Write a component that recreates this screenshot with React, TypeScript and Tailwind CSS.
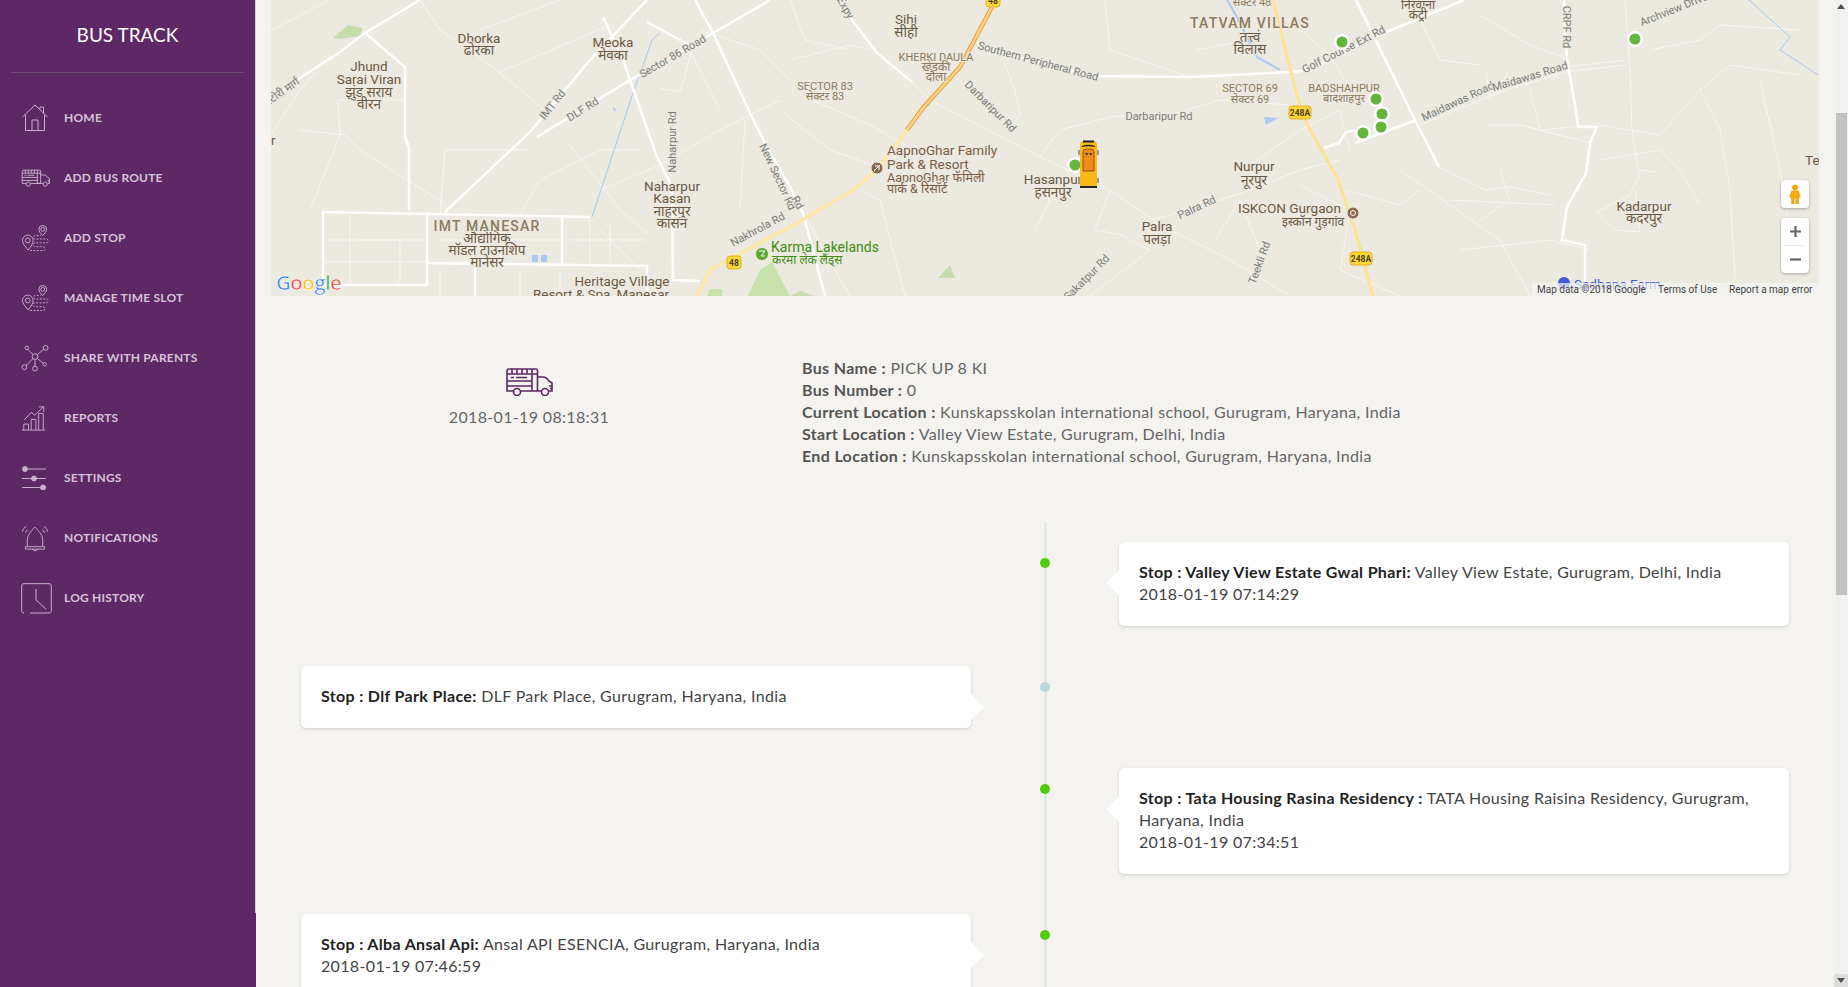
const nav = [
  { label: 'HOME', icon: <HomeIcon /> },
  { label: 'ADD BUS ROUTE', icon: <BusIcon className="w-[29px] h-[18px]" /> },
  { label: 'ADD STOP', icon: <StopIcon /> },
  { label: 'MANAGE TIME SLOT', icon: <StopIcon /> },
  { label: 'SHARE WITH PARENTS', icon: <ShareIcon /> },
  { label: 'REPORTS', icon: <ChartIcon /> },
  { label: 'SETTINGS', icon: <SlidersIcon /> },
  { label: 'NOTIFICATIONS', icon: <BellIcon /> },
  { label: 'LOG HISTORY', icon: <ClockIcon /> },
]

const busInfo = [
  ['Bus Name :', 'PICK UP 8 KI'],
  ['Bus Number :', '0'],
  ['Current Location :', 'Kunskapsskolan international school, Gurugram, Haryana, India'],
  ['Start Location :', 'Valley View Estate, Gurugram, Delhi, India'],
  ['End Location :', 'Kunskapsskolan international school, Gurugram, Haryana, India'],
]

const stops = [
  { name: 'Stop : Valley View Estate Gwal Phari:', place: 'Valley View Estate, Gurugram, Delhi, India', time: '2018-01-19 07:14:29', side: 'right', dot: 'bg-[#52cc0a]' },
  { name: 'Stop : Dlf Park Place:', place: 'DLF Park Place, Gurugram, Haryana, India', time: '', side: 'left', dot: 'bg-[#b9d8dd]' },
  { name: 'Stop : Tata Housing Rasina Residency :', place: 'TATA Housing Raisina Residency, Gurugram, Haryana, India', time: '2018-01-19 07:34:51', side: 'right', dot: 'bg-[#52cc0a]' },
  { name: 'Stop : Alba Ansal Api:', place: 'Ansal API ESENCIA, Gurugram, Haryana, India', time: '2018-01-19 07:46:59', side: 'left', dot: 'bg-[#52cc0a]' },
]

// main roads, in page pixels
const wideRoads = [
  '271,100 300,78 340,52 365,33 420,0',
  '365,33 405,67 405,137 409,147 409,210',
  '323,296 323,212 590,217',
  '323,285 427,285 427,213',
  '562,217 562,265',
  '427,263 647,266 647,296',
  '475,267 475,296',
  '445,212 530,132 590,60 647,0',
  '537,137 630,80 713,33 770,0',
  '603,17 623,60 657,157 672,187 673,280 700,281',
  '695,0 713,33 750,113 767,147 790,187 803,213 825,296',
  '647,22 693,47',
  '840,0 852,20 877,53 912,82',
  '977,43 1000,52 1092,76 1190,77 1290,72 1310,70 1379,35 1464,0',
  '1356,0 1416,122 1439,167',
  '1355,143 1416,120',
  '1324,148 1339,143 1346,132 1355,130',
  '1564,0 1567,60 1576,110 1578,127 1597,127 1590,143 1586,173 1567,207 1562,240 1585,245 1585,287',
]

const thinRoads = [
  '1416,120 1499,87 1564,67 1626,60', '1420,125 1500,92 1566,72 1626,65',
  '271,30 330,0', '420,0 440,30 490,65 545,110', '480,30 560,0', '500,72 610,25', '271,135 300,90 330,55', '300,130 345,135 360,150 447,205',
  '310,210 340,135', '340,135 338,100 405,100', '440,215 445,150 530,150', '520,215 540,180 600,150 640,150', '570,145 620,210 650,235',
  '600,190 660,165 720,130 780,100', '690,50 720,110', '740,210 745,120', '660,88 680,92 693,47', '700,30 760,50 790,80', '790,0 805,40 850,50',
  '790,60 850,45 872,50', '800,95 870,125 915,150', '780,110 830,150 873,165', '803,213 850,296', '860,190 880,200 905,296', '912,82 930,100 1040,157 1110,190 1160,225 1230,260 1290,296',
  '1000,52 1015,90 1020,115 1013,125', '1040,157 1060,130 1110,117 1130,115', '1035,230 1050,200 1030,190', '1110,190 1095,230 1125,235', '1120,235 1150,250 1090,296',
  '1150,220 1190,210 1250,190 1300,170 1340,160', '1215,240 1240,200 1260,250', '1250,165 1300,130 1340,110 1350,150', '1130,115 1170,115 1220,100 1290,105',
  '1105,0 1110,50 1190,77', '1195,50 1250,40', '1300,185 1350,210 1340,270 1400,296', '1439,167 1486,190 1510,187 1550,195', '1400,170 1500,240 1530,296',
  '1450,200 1555,205', '1460,250 1550,240 1590,250', '1590,143 1520,125 1490,125', '1625,0 1630,70 1632,130 1640,180', '1600,125 1660,135 1700,90 1730,65 1800,75',
  '1600,160 1660,150 1680,170 1700,205', '1597,212 1630,195 1640,170 1655,172', '1597,212 1615,230 1640,232 1635,190', '1700,90 1720,130 1730,190 1735,280', '1760,80 1780,170 1790,230',
  '1650,50 1700,40 1720,25 1800,30', '1480,15 1530,45 1570,60', '1486,70 1490,100 1510,70', '1530,90 1540,130 1590,125', '1420,20 1440,60 1480,65', '1300,30 1330,55 1345,80',
  '360,240 400,240 400,285', '350,215 350,285', '440,270 440,296', '500,220 500,262', '590,220 590,265', '610,225 610,262', '325,240 425,240', '325,262 425,262', '440,240 560,240',
  '570,240 645,240', '520,270 520,296', '560,270 560,296', '600,230 640,270', '1345,190 1400,205 1420,190', '1310,30 1290,20', '1500,170 1510,200 1480,220',
]

const labels: [number, number, string, number?][] = [
  [479, 43, 'Dhorka'], [479, 55, 'ढोरका'], [369, 71, 'Jhund'], [369, 84, 'Sarai Viran'], [369, 97, 'झुंड सराय'], [369, 109, 'वीरन'], [613, 47, 'Meoka'], [613, 60, 'मेवका'],
  [672, 191, 'Naharpur'], [672, 203, 'Kasan'], [672, 216, 'नाहरपुर'], [672, 228, 'कासन'], [906, 24, 'Sihi'], [906, 37, 'सीही'], [1053, 184, 'Hasanpur'], [1053, 197, 'हसनपुर'],
  [1254, 171, 'Nurpur'], [1254, 185, 'नूरपुर'], [1157, 231, 'Palra'], [1157, 244, 'पलड़ा'], [1644, 211, 'Kadarpur'], [1644, 223, 'कदरपुर'], [622, 286, 'Heritage Village'], [601, 299, 'Resort & Spa, Manesar'],
  [1418, 9, 'निरवाना', 12], [1418, 19, 'कंट्री', 12], [1250, 42, 'तत्त्वं'], [1250, 54, 'विलास'], [487, 243, 'औद्योगिक'], [487, 255, 'मॉडल टाउनशिप'], [487, 267, 'मानेसर'],
]

const districts: [number, number, string, number, number?][] = [
  [487, 231, 'IMT MANESAR', 14, 1], [936, 61, 'KHERKI DAULA', 11], [825, 90, 'SECTOR 83', 11], [1250, 92, 'SECTOR 69', 11], [1344, 92, 'BADSHAHPUR', 11], [1250, 28, 'TATVAM VILLAS', 14, 1],
  [936, 71, 'खेड़की', 12], [936, 81, 'दौला', 12], [825, 100, 'सेक्टर 83', 11], [1250, 103, 'सेक्टर 69', 11], [1344, 102, 'बादशाहपुर', 11], [1252, 6, 'सेक्टर 48', 11],
]

const roadNames: [number, number, string, number][] = [
  [553, 105, 'IMT Rd', -52], [583, 110, 'DLF Rd', -32], [673, 57, 'Sector 86 Road', -30], [673, 142, 'Naharpur Rd', -90], [777, 177, 'New Sector Rd', 65], [758, 230, 'Nakhrola Rd', -28],
  [283, 92, 'स्टोरी मार्ग', -35], [1038, 62, 'Southern Peripheral Road', 15], [990, 107, 'Darbaripur Rd', 45], [1159, 117, 'Darbaripur Rd', 0], [1197, 208, 'Palra Rd', -25], [1087, 278, 'Sakatpur Rd', -45],
  [1260, 263, 'Teekli Rd', -70], [845, 8, 'Expy', 60], [797, 203, 'Rd', 60], [1344, 50, 'Golf Course Ext Rd', -27], [1566, 27, 'CRPF Rd', 90], [1674, 10, 'Archview Drive', -22], [1458, 102, 'Maidawas Road', -25], [1530, 77, 'Maidawas Road', -17],
]

const markers = [[1342, 42], [1635, 39], [1376, 99], [1382, 114], [1381, 127], [1363, 133], [1075, 165]]

function HomeIcon() {
  return (
    <svg viewBox="0 0 28 28" className="w-[28px] h-[28px]" fill="none" stroke="currentColor" strokeWidth="1">
      <path d="M1.500 13 14 1 26.500 13M4.500 11V26.500H23.500V11M11 26.500V16H17V26.500M19 5.500V3H22.500V9.500" />
    </svg>
  )
}

function BusIcon({ className }: { className: string }) {
  return (
    <svg viewBox="0 0 48 28" className={className} fill="none" stroke="currentColor" strokeWidth="1.600">
      <path d="M8 23H2V3C2 1.500 3 1 4 1H31C32 1 32.500 1.500 32.500 3V23H16M24 23H36.500M32.500 9H38C41 9 42 10 44 13L47 15V23H44" />
      <path d="M2 6H32.500M7 1V6M12 1V6M17 1V6M22 1V6M27 1V6M2 13H27M6 9.500H9M11 9.500H22M27 6V23M2 18H27M47 18H44M47 20.500H45" />
      <circle cx="12" cy="24" r="3.500" /><circle cx="40" cy="24" r="3.500" />
    </svg>
  )
}

function StopIcon() {
  return (
    <svg viewBox="0 0 28 28" className="w-[28px] h-[27px]" fill="none" stroke="currentColor" strokeWidth="1">
      <path d="M7 26C3 21 1 19 1 16A5.500 5.500 0 0 1 12 16C12 19 10 22 7 26Z" />
      <circle cx="6.500" cy="16" r="2.500" />
      <path d="M22 11C20 8.500 18 7 18 4.500A4 4 0 0 1 26 4.500C26 7 24 8.500 22 11Z" />
      <circle cx="22" cy="4.500" r="2" />
      <path strokeDasharray="2 1.500" d="M9 26.500H23C25 26.500 24.500 22.500 22 22.500H14C11.500 22.500 11.500 18.500 14 18.500H26C28 18.500 28 14.500 26 14.500H14C12 14.500 12 11 14 11H20" />
    </svg>
  )
}

function ShareIcon() {
  return (
    <svg viewBox="0 0 28 28" className="w-[28px] h-[27px]" fill="none" stroke="currentColor" strokeWidth="1">
      <circle cx="14" cy="12" r="3" /><circle cx="5.500" cy="3" r="1.800" /><circle cx="25" cy="3" r="2.500" /><circle cx="3" cy="23" r="2.500" /><circle cx="14" cy="24.500" r="2.500" /><circle cx="24" cy="20" r="1.800" />
      <path d="M6.500 4.500 12 10M16.500 10 23 4.500M12 14 4.500 21.500M14 15V22M16.500 14 22.500 19" />
    </svg>
  )
}

function ChartIcon() {
  return (
    <svg viewBox="0 0 28 28" className="w-[26px] h-[27px]" fill="none" stroke="currentColor" strokeWidth="1">
      <path d="M1 26.500H26M3 26.500V20H8V26.500M11 26.500V15H16V26.500M19 26.500V8.500H24V26.500" />
      <path d="M3.500 15.500 11 7.500 15 10.500 24.500 1M19 1.500H24.500V7" />
    </svg>
  )
}

function SlidersIcon() {
  return (
    <svg viewBox="0 0 26 24" className="w-[26px] h-[24px]" fill="none" stroke="currentColor" strokeWidth="1">
      <path d="M5 3H25M1 12.500H25M1 21.500H25" />
      <circle cx="4" cy="3" r="2.500" fill="currentColor" /><circle cx="13" cy="12.500" r="2.500" fill="currentColor" /><circle cx="22" cy="21.500" r="2.500" fill="currentColor" />
    </svg>
  )
}

function BellIcon() {
  return (
    <svg viewBox="0 0 28 28" className="w-[28px] h-[27px]" fill="none" stroke="currentColor" strokeWidth="1">
      <path d="M6 22V17C6 10 9 8 11 5.500C12 4 13 2.500 14 2.500C15 2.500 16 4 17 5.500C19 8 22 10 22 17V22" />
      <path d="M4 22.500H24V25H4ZM11 25 14 27 17 25M1 7C1.500 4 3 2.500 5 1.500M4 8C4.500 6.500 5.500 5.500 6.500 5M27 7C26.500 4 25 2.500 23 1.500M24 8C23.500 6.500 22.500 5.500 21.500 5" />
    </svg>
  )
}

function ClockIcon() {
  return (
    <svg viewBox="0 0 31 31" className="w-[31px] h-[31px]" fill="none" stroke="currentColor" strokeWidth="1">
      <path d="M3 30C1.500 30 .700 29 .700 28V3C.700 1.500 1.500.700 3 .700H28C29.500.700 30.300 1.500 30.300 3V28C30.300 29 29.500 30 28 30H9" />
      <path d="M15 6V17L25 26" />
    </svg>
  )
}

function RoadBadge({ x, y, label }: { x: number; y: number; label: string }) {
  const w = label.length > 2 ? 22 : 14
  return (
    <g>
      <rect x={x - w / 2} y={y - 6} width={w} height={13} rx="3" fill="#fdd835" stroke="#e0b02a" />
      <text x={x} y={y + 4} textAnchor="middle" fontSize="8.500" fontWeight="700" fill="#4d4020">{label}</text>
    </g>
  )
}

function MapCanvas() {
  return (
    <svg viewBox="271 0 1548 296" className="absolute inset-0 w-full h-full" fontFamily="Roboto, 'Noto Sans Devanagari', 'Noto Sans', sans-serif">
      {thinRoads.map((p, i) => <polyline key={i} points={p} fill="none" stroke="#f7f6f2" strokeWidth="1" />)}
      <path d="M333 38 348 25 363 28 360 36 340 39Z" fill="#c6dcae" />
      <path d="M748 296 760 270 772 262 790 296Z" fill="#c9e2ac" />
      <path d="M707 296 710 289 722 289 722 296Z" fill="#c9e2ac" />
      <path d="M938 278 950 265 955 278Z" fill="#c6dcae" />
      <path d="M790 296 800 291 815 296Z" fill="#c6dcae" />
      <polyline points="660,33 652,40 633,93 592,217" fill="none" stroke="#a9c9f2" strokeWidth="1" />
      <polyline points="1749,0 1790,37 1780,50 1818,75" fill="none" stroke="#a9c9f2" strokeWidth="1" />
      <polyline points="1227,0 1237,17 1257,57 1280,70" fill="none" stroke="#a9c9f2" strokeWidth="2" />
      <path d="M1264 117 1278 118 1266 125Z M612 107 616 109 615 112Z" fill="#a9c9f2" />
      <rect x="532" y="255" width="6" height="7" fill="#a9c9f2" /><rect x="541" y="255" width="6" height="7" fill="#a9c9f2" />
      {wideRoads.map((p, i) => <polyline key={i} points={p} fill="none" stroke="#ffffff" strokeWidth="2.500" />)}
      <polyline points="697,296 710,270 790,227 853,190 877,170 907,130" fill="none" stroke="#fde8a6" strokeWidth="3.500" />
      <polyline points="1273,0 1300,107 1310,130 1337,177 1355,230 1373,297" fill="none" stroke="#fde293" strokeWidth="3" />
      <polyline points="907,130 923,108 960,67 992,7" fill="none" stroke="#e9a23b" strokeWidth="4.500" />
      <polyline points="907,130 923,108 960,67 992,7" fill="none" stroke="#fcd28a" strokeWidth="2.500" />

      {roadNames.map(([x, y, t, r]) => (
        <text key={t + x} x={x} y={y + 3} transform={`rotate(${r} ${x} ${y})`} textAnchor="middle" fontSize="11" fill="#7c7c7c" stroke="#ebe9e0" strokeWidth="2" paintOrder="stroke">{t}</text>
      ))}
      {labels.map(([x, y, t, s]) => (
        <text key={t + x} x={x} y={y} textAnchor="middle" fontSize={s ?? 13.500} fill="#6b5a42" stroke="#ebe9e0" strokeWidth="2" paintOrder="stroke">{t}</text>
      ))}
      {districts.map(([x, y, t, s, sp]) => (
        <text key={t} x={x} y={y} textAnchor="middle" fontSize={s} letterSpacing={sp ? 1.200 : 0} fontWeight={sp ? 500 : 400} fill="#8c7b5c" stroke="#ebe9e0" strokeWidth="2" paintOrder="stroke">{t}</text>
      ))}

      <g fill="#7d5c43" stroke="#ebe9e0" strokeWidth="2" paintOrder="stroke" fontSize="13.500">
        <text x="887" y="155">AapnoGhar Family</text>
        <text x="887" y="169">Park &amp; Resort</text>
        <text x="887" y="182" fontSize="12.500">AapnoGhar फॅमिली</text>
        <text x="887" y="193" fontSize="12.500">पार्क &amp; रिसॉर्ट</text>
      </g>
      <g fill="#6b5a42" stroke="#ebe9e0" strokeWidth="2" paintOrder="stroke">
        <text x="1238" y="213" fontSize="13.600">ISKCON Gurgaon</text>
        <text x="1282" y="226" fontSize="12">इस्कॉन गुड़गांव</text>
        <text x="1805" y="165" fontSize="13.500">Te</text>
        <text x="271" y="145" fontSize="13">r</text>
      </g>
      <g fill="#3f8f0e" stroke="#ebe9e0" strokeWidth="2" paintOrder="stroke">
        <text x="771" y="252" fontSize="14">Karma Lakelands</text>
        <text x="772" y="264" fontSize="12">करमा लेक लैंड्स</text>
      </g>
      <text x="1574" y="289" fontSize="13.500" fill="#3e5bd8">Sadhana Farm</text>
      <circle cx="1564" cy="283" r="6" fill="#3e5bd8" />

      <circle cx="877" cy="168" r="6" fill="#8b6a50" stroke="#ebe9e0" /><path d="M874 171 880 165M875 166H879V170" stroke="#fff" fill="none" />
      <circle cx="1353" cy="213" r="6" fill="#8b6a50" stroke="#ebe9e0" /><circle cx="1353" cy="213" r="2.500" fill="none" stroke="#fff" />
      <circle cx="762" cy="254" r="6.500" fill="#5ba82a" stroke="#ebe9e0" /><path d="M759 251H765L761 256H765" stroke="#fff" fill="none" />
      <RoadBadge x={734} y={262} label="48" />
      <RoadBadge x={993} y={0} label="48" />
      <RoadBadge x={1300} y={112} label="248A" />
      <RoadBadge x={1361} y={258} label="248A" />

      {markers.map(([x, y]) => (
        <g key={x}>
          <circle cx={x} cy={y} r="8" fill="#ffffff" />
          <circle cx={x} cy={y} r="5.500" fill="#63b53c" />
        </g>
      ))}

      {/* bus marker */}
      <rect x="1078" y="150" width="3" height="5" fill="#9a9a9a" /><rect x="1096" y="150" width="3" height="5" fill="#9a9a9a" />
      <rect x="1078" y="178" width="3" height="5" fill="#9a9a9a" /><rect x="1096" y="178" width="3" height="5" fill="#9a9a9a" />
      <path d="M1080 187V145Q1080 141 1084 141H1093Q1097 141 1097 145V187Z" fill="#fbb917" />
      <path d="M1083 140.500H1094V142.500H1083ZM1082 146Q1088.500 143.500 1095 146V147Q1088.500 145.500 1082 147ZM1080 186H1097V188H1080Z" fill="#222" />
      <path d="M1083 171V152Q1083 149 1086 149H1091Q1094 149 1094 152V171Z" fill="#f08a1a" stroke="#5a3a10" strokeWidth=".700" />
      <path d="M1085 153H1088L1087 156ZM1089 153H1092L1091 156Z" fill="#333" />

      {/* google logo */}
      <text x="276" y="290" fontFamily="'Open Sans', sans-serif" fontSize="20.500" fontWeight="600" letterSpacing="-.6" stroke="#fff" strokeWidth=".6">
        <tspan fill="#4285f4">G</tspan><tspan fill="#ea4335">o</tspan><tspan fill="#fbbc05">o</tspan><tspan fill="#4285f4">g</tspan><tspan fill="#34a853">l</tspan><tspan fill="#ea4335">e</tspan>
      </text>
    </svg>
  )
}

function MapView() {
  return (
    <div className="relative h-[296px] ml-[15px] mr-[15px] bg-[#ebe9e0] overflow-hidden font-[Roboto,sans-serif]">
      <MapCanvas />
      {/* street view */}
      <div className="absolute top-[180px] right-[10px] w-[28px] h-[28px] bg-white rounded-sm shadow-[0_1px_3px_rgba(0,0,0,.3)] flex items-center justify-center">
        <svg viewBox="0 0 14 24" className="w-[12px] h-[20px]">
          <circle cx="7" cy="4" r="3.500" fill="#f5a90d" />
          <path d="M3 8H11L13.500 16H11.500L11 24H8V17H6V24H3L2.500 16H.500Z" fill="#f5a90d" stroke="#c98a10" strokeWidth=".5" />
        </svg>
      </div>
      {/* zoom buttons */}
      <div className="absolute top-[218px] right-[10px] w-[28px] h-[55px] bg-white rounded-sm shadow-[0_1px_3px_rgba(0,0,0,.3)] flex flex-col items-center">
        <div className="h-[27px] w-full flex items-center justify-center">
          <svg viewBox="0 0 12 12" className="w-[11px] h-[11px]"><path d="M0 6H12M6 0V12" stroke="#666" strokeWidth="2.400" /></svg>
        </div>
        <div className="h-px w-[20px] bg-[#e6e6e6]"></div>
        <div className="h-[27px] w-full flex items-center justify-center">
          <svg viewBox="0 0 12 12" className="w-[11px] h-[11px]"><path d="M0 6H12" stroke="#666" strokeWidth="2.400" /></svg>
        </div>
      </div>
      {/* attribution */}
      <div className="absolute bottom-0 right-0 w-[287px] h-[13px] bg-[#f5f5f5]/70 flex items-center text-[10px] leading-none text-[#444] whitespace-nowrap">
        <span className="ml-[5px] w-[121px]">Map data ©2018 Google</span>
        <span className="w-[71px]">Terms of Use</span>
        <span>Report a map error</span>
      </div>
    </div>
  )
}

function StopCard({ stop }: { stop: (typeof stops)[number] }) {
  const left = stop.side === 'left'
  return (
    <div className="relative w-[670px] px-5 pt-[19px] pb-[21px] bg-white rounded-[5px] shadow-[0_1px_3px_rgba(0,0,0,.16)] text-[16px] tracking-[.34px] leading-[22px] text-[#444]">
      <div className={left ? 'absolute top-[27px] -right-[13px] w-[14px] h-[28px] bg-white [clip-path:polygon(0_0,100%_50%,0_100%)]' : 'absolute top-[27px] -left-[13px] w-[14px] h-[28px] bg-white [clip-path:polygon(100%_0,0_50%,100%_100%)]'}></div>
      <p><b className="font-bold text-[#222]">{stop.name}</b> {stop.place}</p>
      {stop.time && <p>{stop.time}</p>}
    </div>
  )
}

export default function App() {
  return (
    <div className="flex h-[987px] overflow-hidden bg-[#f4f3f0] font-[Lato,sans-serif]">
      {/* Sidebar */}
      <aside className="w-[256px] shrink-0 bg-[#5e2765] text-[#d6c3da]">
        <div className="h-[913px] border-r border-[#d4d0d4]">
          <div className="h-[73px] mx-[11px] pt-[23px] border-b border-[#6f4a75] text-center text-[19px] leading-[24px] text-white">BUS TRACK</div>
          <nav className="pt-[15px]">
            {nav.map((item) => (
              <div key={item.label} className="h-[60px] flex items-center">
                <div className="w-[64px] pl-[21px] flex items-center text-[#c9aecd]">{item.icon}</div>
                <span className="text-[12px] tracking-[.2px] font-bold whitespace-nowrap">{item.label}</span>
              </div>
            ))}
          </nav>
        </div>
      </aside>

      {/* Content */}
      <main className="flex-1 min-w-0">
        <MapView />

        <section className="h-[226px] pt-[61px] ml-[15px] flex text-[16px] tracking-[.34px] leading-[22px] text-[#666]">
          <div className="w-[516px] pt-[11px] flex flex-col items-center">
            <span className="text-[#5e2765]"><BusIcon className="w-[48px] h-[28px]" /></span>
            <p className="mt-[10px]">2018-01-19 08:18:31</p>
          </div>
          <div className="ml-[15px]">
            {busInfo.map(([k, v]) => (
              <p key={k}><b className="font-bold text-[#555]">{k}</b> {v}</p>
            ))}
          </div>
        </section>

        {/* Timeline */}
        <section className="relative pt-5 pl-[45px] flex flex-col gap-10">
          <div className="absolute top-0 left-[788px] w-[3px] h-[600px] bg-[#e7e7e3]"></div>
          {stops.map((stop) => (
            <div key={stop.name} className="relative grid grid-cols-[670px_148px_670px]">
              {stop.side === 'left' ? <StopCard stop={stop} /> : <div></div>}
              <div className="flex justify-center pt-4">
                <span className={`relative w-[10px] h-[10px] rounded-full ${stop.dot}`}></span>
              </div>
              {stop.side === 'right' ? <StopCard stop={stop} /> : <div></div>}
            </div>
          ))}
        </section>
      </main>

      {/* Scrollbar */}
      <div className="w-[14px] shrink-0 bg-[#f1f1f1] flex flex-col">
        <div className="h-[13px] flex items-center justify-center"><div className="w-0 h-0 border-x-[4px] border-x-transparent border-b-[5px] border-b-[#505050]"></div></div>
        <div className="mt-[100px] ml-[2px] h-[482px] w-[11px] bg-[#c1c1c1]"></div>
        <div className="mt-auto h-[13px] bg-[#dcdcdc] flex items-center justify-center"><div className="w-0 h-0 border-x-[4px] border-x-transparent border-t-[5px] border-t-[#505050]"></div></div>
      </div>
    </div>
  )
}
